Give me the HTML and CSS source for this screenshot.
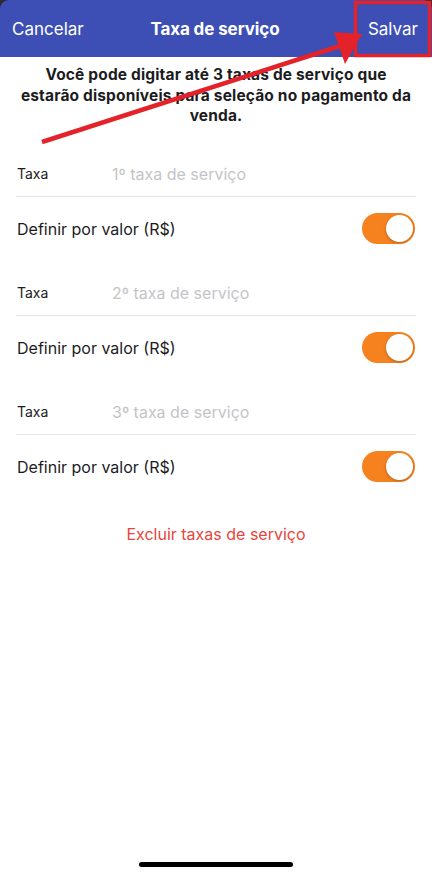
FILE: index.html
```html
<!DOCTYPE html>
<html lang="pt-BR">
<head>
<meta charset="utf-8">
<title>Taxa de serviço</title>
<link rel="stylesheet" href="styles.css">
</head>
<body>
<div class="screen">
  <div class="topframe">
    <header class="navbar">
      <span class="nav-btn left">Cancelar</span>
      <span class="nav-title">Taxa de serviço</span>
      <span class="nav-btn right">Salvar</span>
    </header>
  </div>

  <p class="intro">Você pode digitar até 3 taxas de serviço que<br>estarão disponíveis para seleção no pagamento da<br>venda.</p>

  <section class="group">
    <div class="row field">
      <span class="label">Taxa</span>
      <span class="placeholder">1º taxa de serviço</span>
    </div>
    <div class="row toggle-row">
      <span class="toggle-label">Definir por valor (R$)</span>
      <span class="switch"><span class="knob"></span></span>
    </div>
  </section>

  <section class="group">
    <div class="row field">
      <span class="label">Taxa</span>
      <span class="placeholder">2º taxa de serviço</span>
    </div>
    <div class="row toggle-row">
      <span class="toggle-label">Definir por valor (R$)</span>
      <span class="switch"><span class="knob"></span></span>
    </div>
  </section>

  <section class="group">
    <div class="row field">
      <span class="label">Taxa</span>
      <span class="placeholder">3º taxa de serviço</span>
    </div>
    <div class="row toggle-row">
      <span class="toggle-label">Definir por valor (R$)</span>
      <span class="switch"><span class="knob"></span></span>
    </div>
  </section>

  <div class="delete">Excluir taxas de serviço</div>

  <div class="spacer"></div>
  <div class="home-bar"></div>

  <svg class="annotation" width="432" height="160" viewBox="0 0 432 160" xmlns="http://www.w3.org/2000/svg">
    <rect x="355.5" y="2.5" width="74" height="53" fill="none" stroke="#e3222a" stroke-width="3.5"/>
    <line x1="42" y1="142" x2="340" y2="46" stroke="#e3222a" stroke-width="4.5"/>
    <polygon points="362,34 334,32 345,64" fill="#e3222a"/>
  </svg>
</div>
</body>
</html>
```

FILE: styles.css
```css
* { box-sizing: border-box; }

html, body {
  margin: 0;
  padding: 0;
  background: #ffffff;
}

body {
  font-family: Inter, "Noto Sans", "Liberation Sans", sans-serif;
  color: #1c1c1e;
}

.screen {
  position: relative;
  width: 432px;
  height: 875px;
  display: flex;
  flex-direction: column;
  overflow: hidden;
}

.topframe {
  background: #2b2b33;
}

.navbar {
  height: 57px;
  background: #3d4fb5;
  border-radius: 9px 9px 0 0;
  display: flex;
  align-items: center;
  justify-content: space-between;
  padding: 0 14px 0 12px;
  color: #ffffff;
}

.nav-btn {
  font-size: 17px;
  font-weight: 400;
  width: 80px;
}

.nav-btn.right {
  text-align: right;
}

.nav-title {
  font-size: 17px;
  font-weight: 700;
  letter-spacing: -0.1px;
}

.intro {
  margin: 8px 4px 0;
  font-size: 15.5px;
  font-weight: 700;
  line-height: 20.5px;
  text-align: center;
  white-space: nowrap;
  letter-spacing: 0.15px;
  color: #1c1c1e;
}

.group {
  margin: 0 16px 0 16px;
  display: flex;
  flex-direction: column;
}

.group:first-of-type {
  margin-top: 25px;
}

.group + .group {
  margin-top: 10px;
}

.row {
  display: flex;
  align-items: center;
}

.field {
  height: 45px;
  border-bottom: 1px solid #e6e6ea;
}

.label {
  width: 96px;
  padding-left: 1px;
  font-size: 14px;
  color: #1c1c1e;
}

.placeholder {
  font-size: 16px;
  color: #c4c4c8;
}

.toggle-row {
  height: 64px;
  justify-content: space-between;
}

.toggle-label {
  font-size: 16px;
  padding-left: 1px;
  color: #1c1c1e;
}

.switch {
  width: 53px;
  height: 31px;
  border-radius: 16px;
  background: #f5821f;
  display: flex;
  align-items: center;
  justify-content: flex-end;
  padding: 2px;
  margin-right: 1px;
}

.knob {
  width: 27px;
  height: 27px;
  border-radius: 50%;
  background: #ffffff;
  box-shadow: 0 1px 3px rgba(0, 0, 0, 0.25);
}

.delete {
  margin-top: 25px;
  text-align: center;
  font-size: 16px;
  color: #e8453c;
}

.spacer {
  flex: 1;
}

.home-bar {
  align-self: center;
  width: 154px;
  height: 5px;
  border-radius: 3px;
  background: #000000;
  margin-bottom: 8px;
}

.annotation {
  position: absolute;
  left: 0;
  top: 0;
  pointer-events: none;
}
```
